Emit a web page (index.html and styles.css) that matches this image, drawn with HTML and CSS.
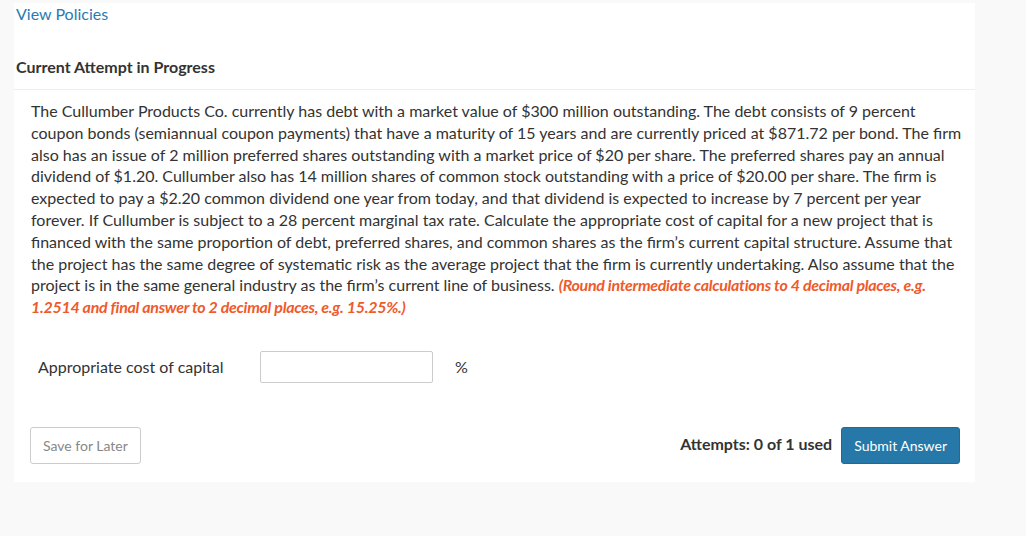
FILE: index.html
```html
<!DOCTYPE html>
<html lang="en">
    <head>
        <meta charset="UTF-8">
        <meta name="viewport" content="width=device-width, initial-scale=1.0">
        <title>Current Attempt in Progress</title>
        <link rel="stylesheet" href="styles.css">
    </head>
    <body>
        <div class="card">
            <a class="policies" href="#">View Policies</a>

            <h2 class="attempt-title">Current Attempt in Progress</h2>

            <div class="question">
                <p>
                    The Cullumber Products Co. currently has debt with a market value of $300 million outstanding. The debt consists of 9 percent coupon bonds (semiannual coupon payments) that have a maturity of 15 years and are currently priced at $871.72 per bond. The firm also has an issue of 2 million preferred shares outstanding with a market price of $20 per share. The preferred shares pay an annual dividend of $1.20. Cullumber also has 14 million shares of common stock outstanding with a price of $20.00 per share. The firm is expected to pay a $2.20 common dividend one year from today, and that dividend is expected to increase by 7 percent per year forever. If Cullumber is subject to a 28 percent marginal tax rate. Calculate the appropriate cost of capital for a new project that is financed with the same proportion of debt, preferred shares, and common shares as the firm’s current capital structure. Assume that the project has the same degree of systematic risk as the average project that the firm is currently undertaking. Also assume that the project is in the same general industry as the firm’s current line of business. <em class="hint">(Round intermediate calculations to 4 decimal places, e.g. 1.2514 and final answer to 2 decimal places, e.g. 15.25%.)</em>
                </p>
            </div>

            <div class="answer-row">
                <label class="answer-label" for="resposta">Appropriate cost of capital</label>
                <input type="text" class="answer-input" id="resposta">
                <span class="unit">%</span>
            </div>

            <div class="actions">
                <button class="btn-save">Save for Later</button>
                <div class="submit-group">
                    <span class="attempts">Attempts: 0 of 1 used</span>
                    <button class="btn-submit">Submit Answer</button>
                </div>
            </div>
        </div>
    </body>
</html>
```

FILE: styles.css
```css
body {
    margin: 0;
    padding: 0;
    font-family: Lato, "Open Sans", Arial, sans-serif;
    background-color: #f9f9f9;
    color: #333333;
}

.card {
    margin: 3px 0 0 14px;
    width: 961px;
    background-color: #ffffff;
    padding-bottom: 18px;
}

.policies {
    display: block;
    padding-left: 2px;
    font-size: 16px;
    line-height: 22px;
    color: #2a7ab2;
    text-decoration: none;
}

.attempt-title {
    margin: 31px 0 0;
    padding: 0 2px 11px;
    font-size: 16px;
    line-height: 22px;
    font-weight: bold;
    color: #333333;
    border-bottom: 1px solid #eeeeee;
}

.question {
    padding: 10px 10px 0 17px;
}

.question p {
    margin: 0;
    font-size: 16px;
    line-height: 21.8px;
}

.hint {
    color: #ef5a2b;
    font-weight: bold;
    font-style: italic;
    letter-spacing: -0.3px;
}

.answer-row {
    display: flex;
    align-items: center;
    margin-top: 33px;
    padding-left: 24px;
    font-size: 16px;
}

.answer-label {
    width: 222px;
}

.answer-input {
    width: 173px;
    height: 32px;
    box-sizing: border-box;
    border: 1px solid #cccccc;
    border-radius: 2px;
    padding: 4px 8px;
    font-family: inherit;
    font-size: 16px;
}

.unit {
    margin-left: 22px;
}

.actions {
    display: flex;
    justify-content: space-between;
    align-items: center;
    margin-top: 44px;
    padding: 0 15px 0 16px;
}

.btn-save {
    height: 37px;
    padding: 0 12px;
    background: #ffffff;
    border: 1px solid #cccccc;
    border-radius: 3px;
    color: #888888;
    font-family: inherit;
    font-size: 14px;
    cursor: pointer;
}

.submit-group {
    display: flex;
    align-items: center;
    gap: 9px;
}

.attempts {
    font-size: 16px;
    font-weight: bold;
    color: #333333;
    margin-top: -3px;
}

.btn-submit {
    height: 37px;
    padding: 0 12px;
    background-color: #2678a8;
    border: 1px solid #22699a;
    border-radius: 3px;
    color: #ffffff;
    font-family: inherit;
    font-size: 14px;
    cursor: pointer;
}
```
